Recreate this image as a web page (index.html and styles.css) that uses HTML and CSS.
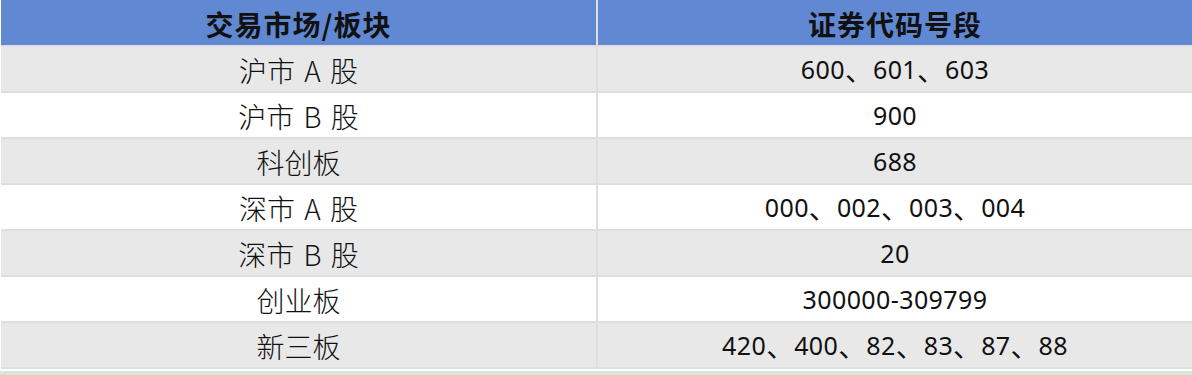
FILE: index.html
```html
<!DOCTYPE html>
<html lang="zh-CN">
<head>
<meta charset="utf-8">
<title>证券代码号段</title>
<link rel="stylesheet" href="styles.css">
</head>
<body>
<div class="table">
  <div class="cell head">交易市场/板块</div>
  <div class="cell head">证券代码号段</div>

  <div class="cell name gray">沪市 A 股</div>
  <div class="cell code gray">600<span class="sep">、</span>601<span class="sep">、</span>603</div>

  <div class="cell name">沪市 B 股</div>
  <div class="cell code">900</div>

  <div class="cell name gray">科创板</div>
  <div class="cell code gray">688</div>

  <div class="cell name">深市 A 股</div>
  <div class="cell code">000<span class="sep">、</span>002<span class="sep">、</span>003<span class="sep">、</span>004</div>

  <div class="cell name gray">深市 B 股</div>
  <div class="cell code gray">20</div>

  <div class="cell name">创业板</div>
  <div class="cell code">300000-309799</div>

  <div class="cell name gray">新三板</div>
  <div class="cell code gray">420<span class="sep">、</span>400<span class="sep">、</span>82<span class="sep">、</span>83<span class="sep">、</span>87<span class="sep">、</span>88</div>
</div>
<div class="footer-strip"></div>
</body>
</html>
```

FILE: styles.css
```css
html, body {
  margin: 0;
  padding: 0;
  background: #ffffff;
}

body {
  width: 1192px;
  height: 375px;
  overflow: hidden;
}

.table {
  margin-left: 1px;
  display: grid;
  grid-template-columns: 595px 594px;
  grid-template-rows: 45px repeat(7, 44px);
  column-gap: 2px;
  row-gap: 2px;
  padding-bottom: 2px;
  background: #dedede;
}

.cell {
  display: flex;
  align-items: center;
  justify-content: center;
  background: #ffffff;
  color: #111111;
  white-space: pre;
}

.cell.gray {
  background: #e8e8e8;
}

.head {
  background: #6188d3;
  font-family: "Noto Sans CJK SC", "Noto Sans", sans-serif;
  font-weight: 700;
  font-size: 28px;
  letter-spacing: 1px;
  padding-top: 2px;
}

.name {
  font-family: "Noto Sans CJK SC", sans-serif;
  font-size: 28px;
  font-weight: 300;
  word-spacing: 3px;
  padding-top: 1px;
}

.code {
  font-family: "Noto Sans", "Noto Sans CJK SC", sans-serif;
  font-size: 25px;
  letter-spacing: 0.4px;
}

.sep {
  font-family: "Noto Sans CJK SC", sans-serif;
  font-size: 28px;
  letter-spacing: 0;
}

.footer-strip {
  margin-top: 2px;
  height: 10px;
  background: #d5ebd3;
}
```
